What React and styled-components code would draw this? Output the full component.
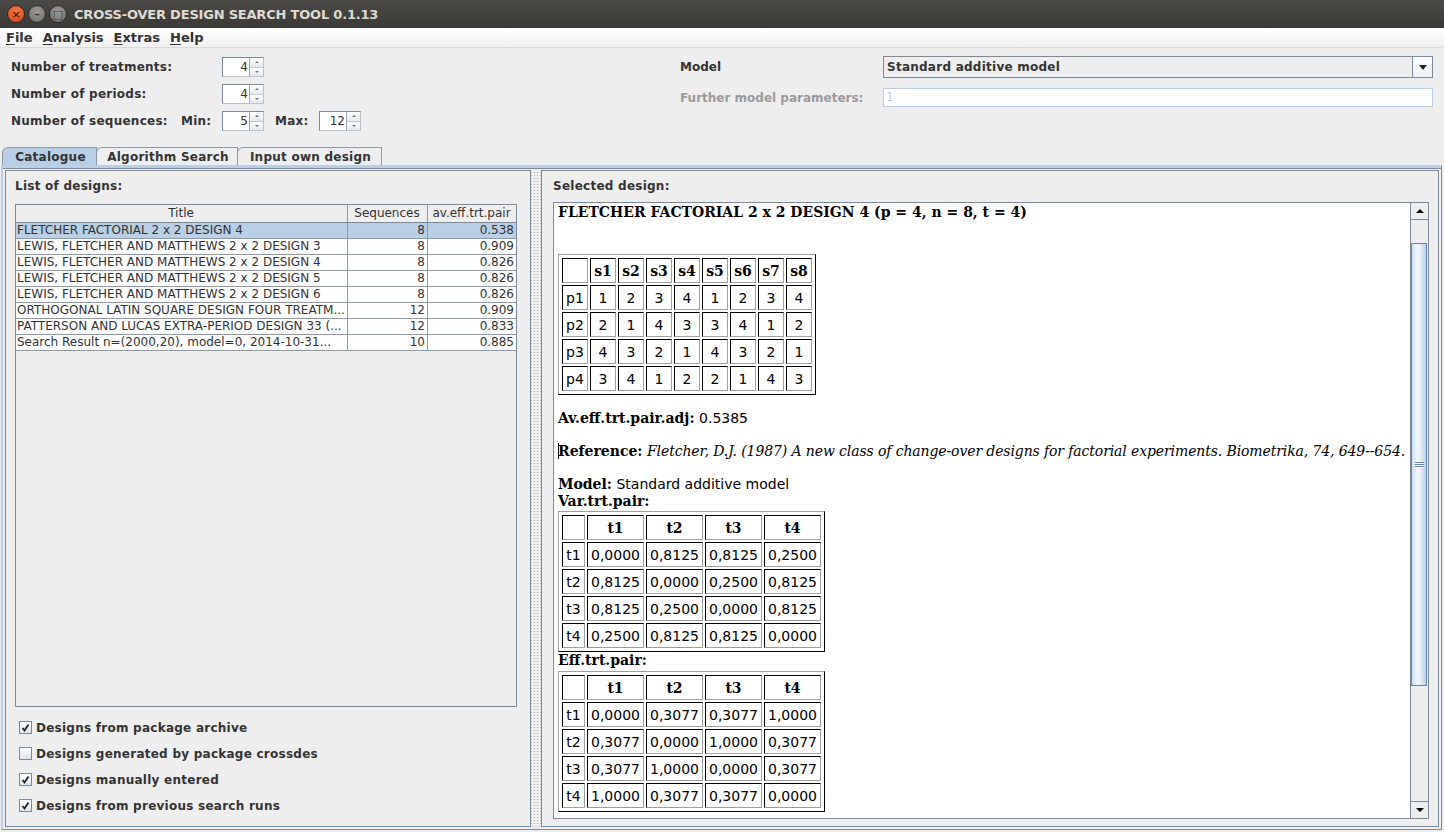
import React from 'react';
import styled, { createGlobalStyle } from 'styled-components';

const GlobalStyle = createGlobalStyle`
  html, body {
    margin: 0;
    padding: 0;
    width: 1444px;
    height: 832px;
    overflow: hidden;
    background: #eeeeee;
  }
  body {
    font-family: "DejaVu Sans", sans-serif;
    color: #333;
  }
`;

const designs = [
  { title: 'FLETCHER FACTORIAL 2 x 2 DESIGN 4', seq: 8, eff: '0.538' },
  { title: 'LEWIS, FLETCHER AND MATTHEWS 2 x 2 DESIGN 3', seq: 8, eff: '0.909' },
  { title: 'LEWIS, FLETCHER AND MATTHEWS 2 x 2 DESIGN 4', seq: 8, eff: '0.826' },
  { title: 'LEWIS, FLETCHER AND MATTHEWS 2 x 2 DESIGN 5', seq: 8, eff: '0.826' },
  { title: 'LEWIS, FLETCHER AND MATTHEWS 2 x 2 DESIGN 6', seq: 8, eff: '0.826' },
  { title: 'ORTHOGONAL LATIN SQUARE DESIGN FOUR TREATM...', seq: 12, eff: '0.909' },
  { title: 'PATTERSON AND LUCAS EXTRA-PERIOD DESIGN 33 (...', seq: 12, eff: '0.833' },
  { title: 'Search Result n=(2000,20), model=0, 2014-10-31...', seq: 10, eff: '0.885' },
];

const designMatrix = [
  ['p1', 1, 2, 3, 4, 1, 2, 3, 4],
  ['p2', 2, 1, 4, 3, 3, 4, 1, 2],
  ['p3', 4, 3, 2, 1, 4, 3, 2, 1],
  ['p4', 3, 4, 1, 2, 2, 1, 4, 3],
];

const varPair = [
  ['t1', '0,0000', '0,8125', '0,8125', '0,2500'],
  ['t2', '0,8125', '0,0000', '0,2500', '0,8125'],
  ['t3', '0,8125', '0,2500', '0,0000', '0,8125'],
  ['t4', '0,2500', '0,8125', '0,8125', '0,0000'],
];

const effPair = [
  ['t1', '0,0000', '0,3077', '0,3077', '1,0000'],
  ['t2', '0,3077', '0,0000', '1,0000', '0,3077'],
  ['t3', '0,3077', '1,0000', '0,0000', '0,3077'],
  ['t4', '1,0000', '0,3077', '0,3077', '0,0000'],
];

const sources = [
  { label: 'Designs from package archive', checked: true },
  { label: 'Designs generated by package crossdes', checked: false },
  { label: 'Designs manually entered', checked: true },
  { label: 'Designs from previous search runs', checked: true },
];

/* ---------- window chrome ---------- */

const Window = styled.div`
  width: 1444px;
  height: 832px;
  display: flex;
  flex-direction: column;
  background: #eeeeee;
`;

const TitleBar = styled.div`
  height: 28px;
  flex: none;
  display: flex;
  align-items: center;
  padding-left: 7px;
  background: linear-gradient(#4b4a46, #3a3935);
  box-sizing: border-box;
`;

const WinButtons = styled.div`
  display: flex;
  gap: 3px;
  margin-right: 7px;
`;

const WinButton = styled.div`
  width: 16px;
  height: 16px;
  border-radius: 50%;
  background: ${({ close }) =>
    close ? 'radial-gradient(circle at 50% 35%, #f47a4e, #d9420f)' : 'radial-gradient(circle at 50% 35%, #9c9b96, #6d6c68)'};
  border: 1px solid #2b2a27;
  display: flex;
  align-items: center;
  justify-content: center;
  color: ${({ close }) => (close ? '#5a1a05' : '#3a3935')};
  font-size: 11px;
  font-weight: bold;
  line-height: 1;
`;

const WindowTitle = styled.div`
  font-family: "DejaVu Sans", sans-serif;
  font-weight: bold;
  font-size: 13px;
  color: #dfdbd2;
  letter-spacing: -0.2px;
`;

const MenuBar = styled.div`
  height: 19px;
  flex: none;
  display: flex;
  align-items: center;
  padding-left: 6px;
  background: linear-gradient(#ffffff, #f1f1f1);
  border-bottom: 1px solid #dadada;
`;

const MenuItem = styled.div`
  font-size: 13px;
  font-weight: bold;
  color: #333;
  margin-right: 10px;
  u {
    text-decoration: underline;
    text-underline-offset: 2px;
  }
`;

/* ---------- top form ---------- */

const TopForm = styled.div`
  display: flex;
  box-sizing: border-box;
  padding: 9px 11px 0 11px;
  height: 83px;
  flex: none;
`;

const ParamGrid = styled.div`
  display: grid;
  grid-template-columns: 170px 41px 42px 11px 44px 42px;
  grid-auto-rows: 20px;
  row-gap: 7px;
  align-items: center;
`;

const FormLabel = styled.div`
  font-size: 12px;
  font-weight: bold;
  letter-spacing: 0.25px;
  color: #333;
  grid-column: ${({ span }) => (span ? `span ${span}` : 'auto')};
  white-space: nowrap;
`;

const SpinBox = styled.div`
  width: 42px;
  height: 20px;
  display: flex;
  box-sizing: border-box;
  border: 1px solid #7a8a99;
  border-right-color: #b8c3cc;
  border-bottom-color: #b8c3cc;
  background: #fff;
`;

const SpinValue = styled.div`
  flex: 1;
  font-size: 12px;
  text-align: right;
  padding-right: 1px;
  line-height: 18px;
  color: #333;
`;

const SpinButtons = styled.div`
  width: 13px;
  display: flex;
  flex-direction: column;
  border-left: 1px solid #9aa7b3;
`;

const SpinBtn = styled.div`
  flex: 1;
  display: flex;
  align-items: center;
  justify-content: center;
  background: linear-gradient(#ffffff, #e6e9ec);
  & + & {
    border-top: 1px solid #c2cad2;
  }
`;

const Tri = styled.div`
  width: 0;
  height: 0;
  border-left: 2px solid transparent;
  border-right: 2px solid transparent;
  ${({ up }) => (up ? 'border-bottom: 2px solid #777;' : 'border-top: 2px solid #777;')}
`;

const Spinner = ({ value }) => (
  <SpinBox>
    <SpinValue>{value}</SpinValue>
    <SpinButtons>
      <SpinBtn>
        <Tri up />
      </SpinBtn>
      <SpinBtn>
        <Tri />
      </SpinBtn>
    </SpinButtons>
  </SpinBox>
);

const ModelGrid = styled.div`
  margin-left: auto;
  margin-top: -1px;
  display: grid;
  grid-template-columns: 203px 550px;
  grid-template-rows: 22px 19px;
  row-gap: 10px;
  align-items: center;
`;

const ModelLabel = styled.div`
  font-size: 12px;
  font-weight: bold;
  color: ${({ disabled }) => (disabled ? '#9a9a9a' : '#333')};
`;

const Combo = styled.div`
  height: 22px;
  box-sizing: border-box;
  border: 1px solid #7a8a99;
  background: #eeeeee;
  display: flex;
  align-items: center;
`;

const ComboText = styled.div`
  flex: 1;
  font-size: 12px;
  font-weight: bold;
  letter-spacing: 0.25px;
  color: #333;
  padding-left: 3px;
`;

const ComboArrow = styled.div`
  width: 19px;
  height: 20px;
  border-left: 1px solid #7a8a99;
  background: linear-gradient(#ffffff, #eef1f4);
  display: flex;
  align-items: center;
  justify-content: center;
`;

const DownTri = styled.div`
  width: 0;
  height: 0;
  border-left: 4px solid transparent;
  border-right: 4px solid transparent;
  border-top: 5px solid #222;
`;

const TextField = styled.div`
  height: 19px;
  box-sizing: border-box;
  border: 1px solid #b8cfe5;
  background: #fff;
  font-size: 12px;
  color: #b8cfe5;
  padding-left: 2px;
  line-height: 17px;
`;

/* ---------- tabs ---------- */

const TabRow = styled.div`
  display: flex;
  padding: 16px 0 0 3px;
  height: 18px;
  flex: none;
`;

const Tab = styled.div`
  width: ${({ w }) => w}px;
  height: 18px;
  box-sizing: border-box;
  border: 1px solid #8a99a6;
  border-bottom: none;
  border-top-left-radius: 6px;
  margin-left: -1px;
  background: ${({ active }) => (active ? '#b8cfe5' : '#eeeeee')};
  font-size: 12px;
  font-weight: bold;
  letter-spacing: 0.25px;
  color: #333;
  display: flex;
  align-items: center;
  justify-content: center;
  padding-left: 2px;
`;

const TabContent = styled.div`
  flex: 1;
  display: flex;
  margin: 0 2px 2px 1px;
  border: 1px solid #7a8a99;
  border-top: 3px solid #b8cfe5;
  border-left: 2px solid #b8cfe5;
  box-shadow: inset 0 1px 0 #7a8a99;
  padding: 2px;
  background: #eeeeee;
`;

/* ---------- left panel ---------- */

const LeftPanel = styled.div`
  width: 526px;
  flex: none;
  box-sizing: border-box;
  border: 1px solid #7a8a99;
  padding: 8px 13px 0 9px;
  display: flex;
  flex-direction: column;
`;

const PanelTitle = styled.div`
  font-size: 12px;
  font-weight: bold;
  letter-spacing: 0.25px;
  color: #333;
  height: 15px;
  line-height: 15px;
  margin-bottom: ${({ gap }) => gap}px;
`;

const TableBox = styled.div`
  height: 503px;
  border: 1px solid #7a8a99;
  box-sizing: border-box;
  background: #eeeeee;
`;

const Row = styled.div`
  display: grid;
  grid-template-columns: 332px 80px 1fr;
  height: ${({ header }) => (header ? 18 : 16)}px;
  box-sizing: border-box;
  border-bottom: 1px solid ${({ header }) => (header ? '#7a8a99' : '#8e9ba7')};
  background: ${({ header, selected }) => (header ? '#eeeeee' : selected ? '#b8cfe5' : '#ffffff')};
`;

const Cell = styled.div`
  font-size: 12px;
  color: #333;
  line-height: ${({ header }) => (header ? 17 : 15)}px;
  text-align: ${({ align }) => align || 'left'};
  padding: 0 2px 0 1px;
  border-right: 1px solid #8e9ba7;
  white-space: nowrap;
  overflow: hidden;
  &:last-child {
    border-right: none;
  }
`;

const Checks = styled.div`
  display: flex;
  flex-direction: column;
  gap: 13px;
  padding: 14px 0 0 4px;
`;

const CheckRow = styled.div`
  display: flex;
  align-items: center;
  height: 13px;
  gap: 4px;
  font-size: 12px;
  font-weight: bold;
  letter-spacing: 0.25px;
  color: #333;
`;

const CheckBox = styled.div`
  width: 13px;
  height: 13px;
  box-sizing: border-box;
  border: 1px solid #7a8a99;
  background: linear-gradient(#ffffff, #dde4ea);
  display: flex;
  align-items: center;
  justify-content: center;
`;

const Divider = styled.div`
  width: 10px;
  flex: none;
  background-color: #eeeeee;
  background-image: radial-gradient(#b7b7b7 0.7px, transparent 0.8px);
  background-size: 3px 3px;
  background-position: 2px 1px;
`;

/* ---------- right panel ---------- */

const RightPanel = styled.div`
  flex: 1;
  box-sizing: border-box;
  border: 1px solid #7a8a99;
  padding: 8px 9px 7px 11px;
  display: flex;
  flex-direction: column;
`;

const Editor = styled.div`
  flex: 1;
  display: flex;
  border: 1px solid #7a8a99;
  background: #ffffff;
  overflow: hidden;
`;

const Doc = styled.div`
  flex: 1;
  overflow: hidden;
  padding: 1px 4px 0 4px;
  color: #000;
  font-family: "DejaVu Sans", sans-serif;
  font-size: 14px;
`;

const DocTitle = styled.div`
  font-family: "DejaVu Serif", serif;
  font-weight: bold;
  font-size: 14px;
  line-height: 17px;
  margin-bottom: 33px;
`;

const Para = styled.div`
  line-height: 17px;
  margin-top: ${({ mt }) => mt || 0}px;
  white-space: nowrap;
`;

const Strong = styled.span`
  font-family: "DejaVu Serif", serif;
  font-weight: bold;
  font-size: 14px;
`;

const Cite = styled.span`
  font-family: "DejaVu Serif", serif;
  font-style: italic;
  font-size: 14px;
  letter-spacing: -0.11px;
`;

const Caret = styled.span`
  display: inline-block;
  width: 1px;
  height: 16px;
  background: #000;
  vertical-align: -3px;
  margin-right: -1px;
`;

const HtmlTable = styled.table`
  border-collapse: separate;
  border-spacing: 2px;
  padding: 1px;
  border: 1px solid;
  border-color: #a0a0a0 #000 #000 #a0a0a0;
  margin-top: ${({ mt }) => mt || 0}px;
`;

const Td = styled.td`
  box-sizing: border-box;
  height: 25px;
  width: ${({ w }) => w}px;
  padding: 0;
  border: 1px solid;
  border-color: #000 #a0a0a0 #a0a0a0 #000;
  text-align: center;
  font-family: ${({ head }) => (head ? '"DejaVu Serif", serif' : '"DejaVu Sans", sans-serif')};
  font-weight: ${({ head }) => (head ? 'bold' : 'normal')};
  font-size: 14px;
  color: #000;
`;

const Scrollbar = styled.div`
  width: 17px;
  flex: none;
  display: flex;
  flex-direction: column;
  border-left: 1px solid #7a8a99;
  background: #eeeeee;
`;

const ScrollBtn = styled.div`
  height: 17px;
  flex: none;
  box-sizing: border-box;
  border-bottom: ${({ down }) => (down ? 'none' : '1px solid #7a8a99')};
  border-top: ${({ down }) => (down ? '1px solid #7a8a99' : 'none')};
  background: #eeeeee;
  display: flex;
  align-items: center;
  justify-content: center;
`;

const ArrowTri = styled.div`
  width: 0;
  height: 0;
  border-left: 4px solid transparent;
  border-right: 4px solid transparent;
  ${({ up }) => (up ? 'border-bottom: 4px solid #000;' : 'border-top: 4px solid #000;')}
`;

const Track = styled.div`
  flex: 1;
  display: flex;
  flex-direction: column;
`;

const Thumb = styled.div`
  box-sizing: border-box;
  margin: 0 1px 0 0;
  border: 1px solid #6382bf;
  background: linear-gradient(90deg, #c8ddf2 0%, #f5f9fd 40%, #dbe7f4 70%, #b8cfe5 100%);
  display: flex;
  align-items: center;
  justify-content: center;
`;

const Grip = styled.div`
  width: 9px;
  height: 6px;
  background: repeating-linear-gradient(#6382bf 0 1px, #ffffff 1px 2px);
`;

const Check = () => (
  <svg width="9" height="9" viewBox="0 0 9 9">
    <path d="M1.5 5 L3.5 7.5 L7.5 1.5" fill="none" stroke="#222" strokeWidth="1.8" />
  </svg>
);

const DataTable = ({ rows, mt }) => (
  <HtmlTable mt={mt}>
    <tbody>
      <tr>
        <Td w={23} />
        {['t1', 't2', 't3', 't4'].map(t => (
          <Td head key={t} w={57}>
            {t}
          </Td>
        ))}
      </tr>
      {rows.map(r => (
        <tr key={r[0]}>
          {r.map((v, i) => (
            <Td key={i} w={i === 0 ? 23 : 57}>
              {v}
            </Td>
          ))}
        </tr>
      ))}
    </tbody>
  </HtmlTable>
);

const App = () => {
  return (
    <Window>
      <GlobalStyle />
      <TitleBar>
        <WinButtons>
          <WinButton close>×</WinButton>
          <WinButton>–</WinButton>
          <WinButton>□</WinButton>
        </WinButtons>
        <WindowTitle>CROSS-OVER DESIGN SEARCH TOOL 0.1.13</WindowTitle>
      </TitleBar>
      <MenuBar>
        <MenuItem>
          <u>F</u>ile
        </MenuItem>
        <MenuItem>
          <u>A</u>nalysis
        </MenuItem>
        <MenuItem>
          <u>E</u>xtras
        </MenuItem>
        <MenuItem>
          <u>H</u>elp
        </MenuItem>
      </MenuBar>

      <TopForm>
        <ParamGrid>
          <FormLabel span={2}>Number of treatments:</FormLabel>
          <Spinner value="4" />
          <div />
          <div />
          <div />
          <FormLabel span={2}>Number of periods:</FormLabel>
          <Spinner value="4" />
          <div />
          <div />
          <div />
          <FormLabel>Number of sequences:</FormLabel>
          <FormLabel>Min:</FormLabel>
          <Spinner value="5" />
          <div />
          <FormLabel>Max:</FormLabel>
          <Spinner value="12" />
        </ParamGrid>
        <ModelGrid>
          <ModelLabel>Model</ModelLabel>
          <Combo>
            <ComboText>Standard additive model</ComboText>
            <ComboArrow>
              <DownTri />
            </ComboArrow>
          </Combo>
          <ModelLabel disabled>Further model parameters:</ModelLabel>
          <TextField>1</TextField>
        </ModelGrid>
      </TopForm>

      <TabRow>
        <Tab active w={95}>
          Catalogue
        </Tab>
        <Tab w={142}>Algorithm Search</Tab>
        <Tab w={145}>Input own design</Tab>
      </TabRow>

      <TabContent>
        <LeftPanel>
          <PanelTitle gap={10}>List of designs:</PanelTitle>
          <TableBox>
            <Row header>
              <Cell header align="center">
                Title
              </Cell>
              <Cell header align="center">
                Sequences
              </Cell>
              <Cell header align="center">
                av.eff.trt.pair
              </Cell>
            </Row>
            {designs.map((d, i) => (
              <Row key={d.title} selected={i === 0}>
                <Cell>{d.title}</Cell>
                <Cell align="right">{d.seq}</Cell>
                <Cell align="right">{d.eff}</Cell>
              </Row>
            ))}
          </TableBox>
          <Checks>
            {sources.map(s => (
              <CheckRow key={s.label}>
                <CheckBox>{s.checked && <Check />}</CheckBox>
                {s.label}
              </CheckRow>
            ))}
          </Checks>
        </LeftPanel>

        <Divider />

        <RightPanel>
          <PanelTitle gap={8}>Selected design:</PanelTitle>
          <Editor>
            <Doc>
              <DocTitle>FLETCHER FACTORIAL 2 x 2 DESIGN 4 (p = 4, n = 8, t = 4)</DocTitle>
              <HtmlTable>
                <tbody>
                  <tr>
                    <Td w={26} />
                    {['s1', 's2', 's3', 's4', 's5', 's6', 's7', 's8'].map(s => (
                      <Td head key={s} w={26}>
                        {s}
                      </Td>
                    ))}
                  </tr>
                  {designMatrix.map(r => (
                    <tr key={r[0]}>
                      {r.map((v, i) => (
                        <Td key={i} w={26}>
                          {v}
                        </Td>
                      ))}
                    </tr>
                  ))}
                </tbody>
              </HtmlTable>
              <Para mt={15}>
                <Strong>Av.eff.trt.pair.adj:</Strong> 0.5385
              </Para>
              <Para mt={16}>
                <Caret />
                <Strong>Reference:</Strong>{' '}
                <Cite>
                  Fletcher, D.J. (1987) A new class of change-over designs for factorial experiments. Biometrika, 74,
                  649--654.
                </Cite>
              </Para>
              <Para mt={16}>
                <Strong>Model:</Strong> Standard additive model
              </Para>
              <Para>
                <Strong>Var.trt.pair:</Strong>
              </Para>
              <DataTable rows={varPair} mt={1} />
              <Para>
                <Strong>Eff.trt.pair:</Strong>
              </Para>
              <DataTable rows={effPair} mt={2} />
            </Doc>
            <Scrollbar>
              <ScrollBtn>
                <ArrowTri up />
              </ScrollBtn>
              <Track>
                <Thumb style={{ marginTop: 23, height: 443 }}>
                  <Grip />
                </Thumb>
              </Track>
              <ScrollBtn down>
                <ArrowTri />
              </ScrollBtn>
            </Scrollbar>
          </Editor>
        </RightPanel>
      </TabContent>
    </Window>
  );
};

export default App;
